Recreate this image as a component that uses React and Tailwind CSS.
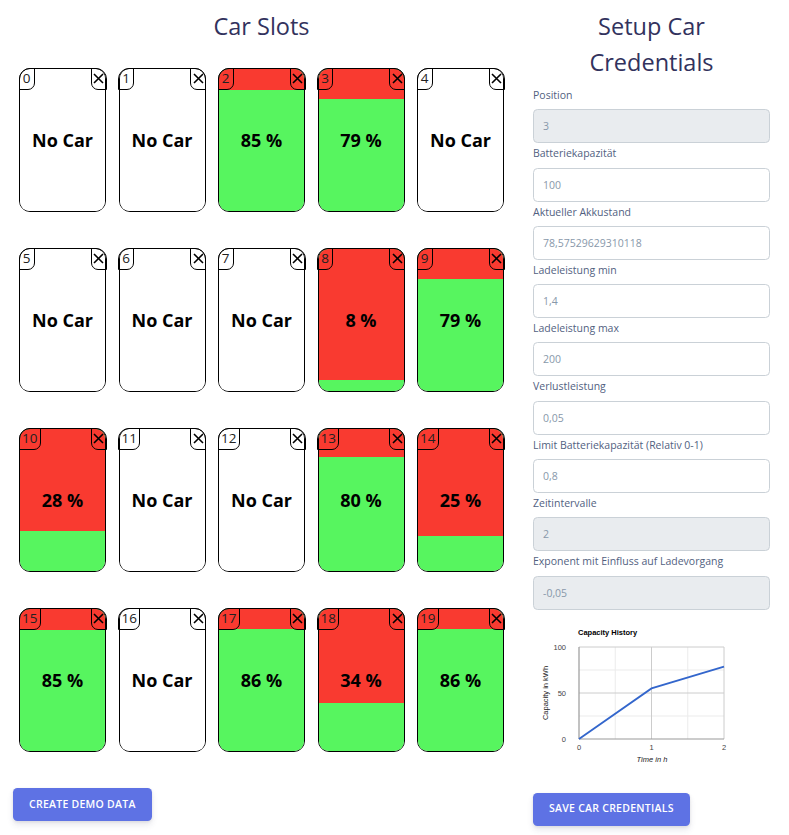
import React from "react";

const slots = [
  null, null, 85, 79, null,
  null, null, null, 8, 79,
  28, null, null, 80, 25,
  85, null, 86, 34, 86,
];

const fields = [
  { label: "Position", value: "3", disabled: true },
  { label: "Batteriekapazität", value: "100" },
  { label: "Aktueller Akkustand", value: "78,57529629310118" },
  { label: "Ladeleistung min", value: "1,4" },
  { label: "Ladeleistung max", value: "200" },
  { label: "Verlustleistung", value: "0,05" },
  { label: "Limit Batteriekapazität (Relativ 0-1)", value: "0,8" },
  { label: "Zeitintervalle", value: "2", disabled: true },
  { label: "Exponent mit Einfluss auf Ladevorgang", value: "-0,05", disabled: true },
];

function Card({ index, pct }) {
  const hasCar = pct !== null;
  return (
    <div className="relative h-[144px] w-[87px] rounded-[11px] border-[1.5px] border-black">
      <div
        className={
          "absolute inset-0 flex flex-col overflow-hidden rounded-[9.5px] " +
          (hasCar ? "bg-[#57f55f]" : "bg-white")
        }
      >
        {hasCar && (
          <div className="w-full bg-[#f93a30]" style={{ height: `${100 - pct}%` }} />
        )}
      </div>
      <div className="absolute inset-0 flex items-center justify-center">
        <span className="text-[18px] font-bold text-black">
          {hasCar ? `${pct} %` : "No Car"}
        </span>
      </div>
      <div className="absolute left-[-1.5px] top-[-1.5px] flex h-[22px] min-w-[16px] items-center justify-center rounded-br-[7px] rounded-tl-[11px] border-[1.5px] border-black px-[2.5px] text-[13.5px] leading-none text-[#222]">
        {index}
      </div>
      <div className="absolute right-[-1.5px] top-[-1.5px] flex h-[22px] w-[16px] items-center justify-center rounded-bl-[7px] rounded-tr-[11px] border-[1.5px] border-black">
        <svg width="11" height="11" viewBox="0 0 11 11">
          <path d="M1 1 L10 10 M10 1 L1 10" stroke="black" strokeWidth="1.6" />
        </svg>
      </div>
    </div>
  );
}

function Chart() {
  const x0 = 46, x1 = 191, yT = 35, yB = 127;
  const w = x1 - x0, h = yB - yT;
  const px = (v) => x0 + (v / 2) * w;
  const py = (v) => yB - (v / 100) * h;
  return (
    <svg width="237" height="170" className="mt-[2px] block" style={{ fontFamily: "'Liberation Sans', Arial, sans-serif" }}>
      <text x="45" y="23" fontSize="7.5" fontWeight="bold" fill="#000">Capacity History</text>
      {[25, 75].map((v) => (
        <line key={"hm" + v} x1={x0} x2={x1} y1={py(v)} y2={py(v)} stroke="#ebebeb" strokeWidth="1" />
      ))}
      {[0.5, 1.5].map((v) => (
        <line key={"vm" + v} x1={px(v)} x2={px(v)} y1={yT} y2={yB} stroke="#ebebeb" strokeWidth="1" />
      ))}
      {[50, 100].map((v) => (
        <line key={"h" + v} x1={x0} x2={x1} y1={py(v)} y2={py(v)} stroke="#cccccc" strokeWidth="1" />
      ))}
      {[1, 2].map((v) => (
        <line key={"v" + v} x1={px(v)} x2={px(v)} y1={yT} y2={yB} stroke="#cccccc" strokeWidth="1" />
      ))}
      <line x1={x0} x2={x1} y1={yB} y2={yB} stroke="#999" strokeWidth="1.2" />
      <line x1={x0} x2={x0} y1={yT} y2={yB} stroke="#999" strokeWidth="1.2" />
      <polyline
        points={`${px(0)},${py(0)} ${px(1)},${py(55)} ${px(2)},${py(78.6)}`}
        fill="none"
        stroke="#3366cc"
        strokeWidth="1.8"
      />
      <g fontSize="7.5" fill="#444">
        <text x="33" y={py(100) + 3} textAnchor="end">100</text>
        <text x="33" y={py(50) + 3} textAnchor="end">50</text>
        <text x="33" y={py(0) + 3} textAnchor="end">0</text>
        <text x={px(0)} y="137.5" textAnchor="middle">0</text>
        <text x={px(1)} y="137.5" textAnchor="middle">1</text>
        <text x={px(2)} y="137.5" textAnchor="middle">2</text>
      </g>
      <text x="119" y="150" fontSize="7.5" fontStyle="italic" fill="#222" textAnchor="middle">Time in h</text>
      <text
        x="0"
        y="0"
        fontSize="7.5"
        fill="#222"
        textAnchor="middle"
        transform="translate(15 81) rotate(-90)"
      >
        Capacity in kWh
      </text>
    </svg>
  );
}

export default function App() {
  return (
    <div
      className="flex h-[835px] w-[789px] bg-white"
      style={{ fontFamily: "'Open Sans', 'Noto Sans', sans-serif" }}
    >
      <div className="w-[533px] shrink-0 pl-[13px]">
        <div className="ml-[6px] w-[485px]">
          <h2 className="mt-[7.5px] text-center text-[23.5px] font-normal leading-[36px] text-[#32325d]">
            Car Slots
          </h2>
          <div className="mt-[24.5px] grid grid-cols-[repeat(5,87px)] gap-x-[12.5px] gap-y-[36px]">
            {slots.map((p, i) => (
              <Card key={i} index={i} pct={p} />
            ))}
          </div>
        </div>
        <button className="mt-[36px] h-[33px] rounded-[4.5px] bg-[#5e72e4] px-[16px] text-[10.5px] font-semibold uppercase tracking-[0.025em] text-white shadow-[0_4px_6px_rgba(50,50,93,0.11),0_1px_3px_rgba(0,0,0,0.08)]">
          Create Demo Data
        </button>
      </div>
      <div className="flex w-[237px] shrink-0 flex-col">
        <h2 className="mt-[7.5px] text-center text-[23.5px] font-normal leading-[36px] text-[#32325d]">
          Setup Car
          <br />
          Credentials
        </h2>
        <div className="mt-[5.5px] flex flex-col">
          {fields.map((f) => (
            <div key={f.label} className="flex flex-col">
              <label className="mb-[4.3px] h-[20px] text-[10.5px] leading-[20px] text-[#525f7f]">
                {f.label}
              </label>
              <input
                readOnly
                value={f.value}
                className={
                  "h-[34px] w-full rounded-[4.5px] border border-[#cad1d7] px-[9px] text-[10.5px] text-[#8898aa] outline-none " +
                  (f.disabled ? "bg-[#e9ecef]" : "bg-white")
                }
              />
            </div>
          ))}
        </div>
        <Chart />
        <div>
          <button className="mt-[11px] h-[33px] rounded-[4.5px] bg-[#5e72e4] px-[16px] text-[10.5px] font-semibold uppercase tracking-[0.025em] text-white shadow-[0_4px_6px_rgba(50,50,93,0.11),0_1px_3px_rgba(0,0,0,0.08)]">
            Save Car Credentials
          </button>
        </div>
      </div>
    </div>
  );
}
